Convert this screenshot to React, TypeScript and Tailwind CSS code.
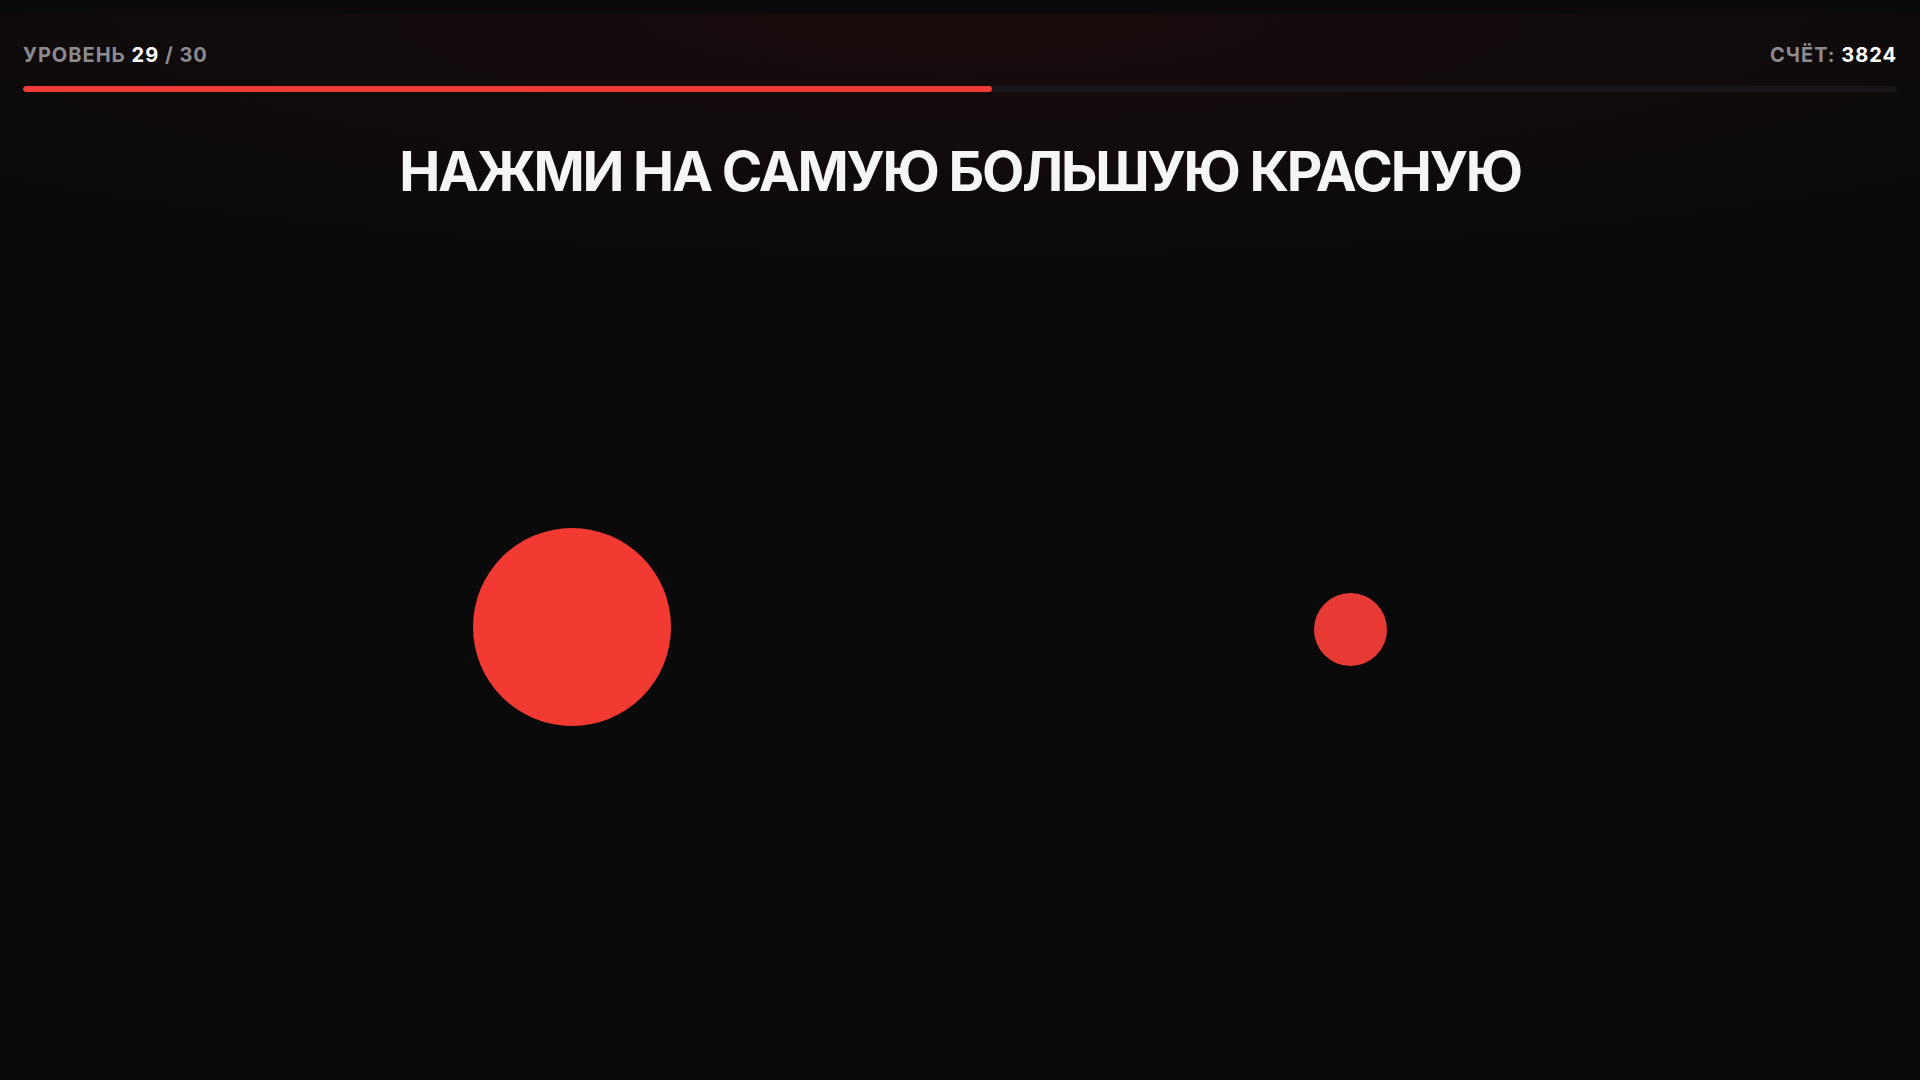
import React from 'react';

// Game screen: level/score header, progress bar, prompt and tappable circles
const level = 29;
const total = 30;
const score = 3824;
const progress = 51.7;

const circles = [
  { id: 1, x: 572, y: 627, size: 198, color: 'bg-[#f23a33]' },
  { id: 2, x: 1350, y: 629, size: 73, color: 'bg-[#e83a34]' },
];

export default function App() {
  return (
    <div
      className="w-[1920px] h-[1080px] bg-[#0a0a0a] flex flex-col overflow-hidden"
      style={{ fontFamily: 'Inter, "Noto Sans", sans-serif' }}
    >
      <div className="h-[14px] shrink-0 bg-[#0a0a0a]" />
      <div className="relative flex-1 bg-[radial-gradient(ellipse_75%_270px_at_50%_0%,#1a0c0d_0%,#120b0c_45%,#0a0a0a_100%)]">
        <header className="px-[23px] pt-[31px]">
          <div className="flex items-center justify-between text-[20px] font-bold tracking-[0.05em] leading-none">
            <div className="text-[#8b8b8f]">
              УРОВЕНЬ <span className="text-white">{level}</span> / {total}
            </div>
            <div className="text-[#8b8b8f]">
              СЧЁТ: <span className="text-white">{score}</span>
            </div>
          </div>
          <div className="mt-[21px] h-[6px] w-full rounded-full bg-[#17171a] overflow-hidden">
            <div className="h-full rounded-full bg-[#ef3b36]" style={{ width: `${progress}%` }} />
          </div>
        </header>

        <h1 className="mt-[52px] text-center text-[#f5f5f5] text-[55px] font-bold leading-none tracking-[-0.04em]">
          НАЖМИ НА САМУЮ БОЛЬШУЮ КРАСНУЮ
        </h1>

        {circles.map((c) => (
          <button
            key={c.id}
            className={`absolute rounded-full ${c.color}`}
            style={{
              left: c.x - c.size / 2,
              top: c.y - 14 - c.size / 2,
              width: c.size,
              height: c.size,
            }}
          />
        ))}
      </div>
    </div>
  );
}
